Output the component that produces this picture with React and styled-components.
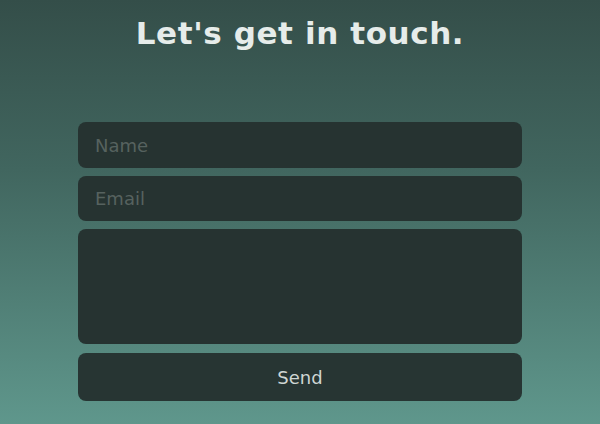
import React from "react";
import styled, { createGlobalStyle } from "styled-components";

const GlobalStyle = createGlobalStyle`
  html, body {
    margin: 0;
    padding: 0;
  }
  body {
    font-family: "DejaVu Sans", sans-serif;
  }
`;

const Page = styled.div`
  width: 600px;
  height: 424px;
  overflow: hidden;
  background: linear-gradient(180deg, #344e49 0%, #41665f 40%, #5f978c 100%);
  display: flex;
  flex-direction: column;
  align-items: center;
`;

const Title = styled.h1`
  margin: 12px 0 0;
  font-family: "DejaVu Sans", sans-serif;
  font-weight: 700;
  font-size: 31px;
  letter-spacing: 0.6px;
  color: #e6ecea;
  line-height: 42px;
`;

const Form = styled.form`
  margin-top: 68px;
  width: 444px;
  display: flex;
  flex-direction: column;
  gap: 8px;
`;

const Field = styled.input`
  box-sizing: border-box;
  width: 100%;
  height: ${(p) => p.$h || 46}px;
  border: none;
  border-radius: 8px;
  background: #263331;
  padding: 0 17px;
  font-family: "DejaVu Sans", sans-serif;
  font-size: 18px;
  color: #d0d8d5;
  outline: none;
  &::placeholder {
    color: #56625f;
  }
`;

const Message = styled.textarea`
  box-sizing: border-box;
  width: 100%;
  height: 115px;
  border: none;
  border-radius: 8px;
  background: #263331;
  padding: 12px 17px;
  resize: none;
  outline: none;
  font-family: "DejaVu Sans", sans-serif;
  font-size: 18px;
  color: #d0d8d5;
`;

const Send = styled.button`
  height: 48px;
  margin-top: 1px;
  border: none;
  border-radius: 8px;
  background: #273533;
  color: #cfd6d3;
  font-family: "DejaVu Sans", sans-serif;
  font-size: 18px;
  cursor: pointer;
`;

export default function App() {
  return (
    <Page>
      <GlobalStyle />
      <Title>Let's get in touch.</Title>
      <Form onSubmit={(e) => e.preventDefault()}>
        <Field placeholder="Name" />
        <Field placeholder="Email" $h={45} />
        <Message />
        <Send type="submit">Send</Send>
      </Form>
    </Page>
  );
}
